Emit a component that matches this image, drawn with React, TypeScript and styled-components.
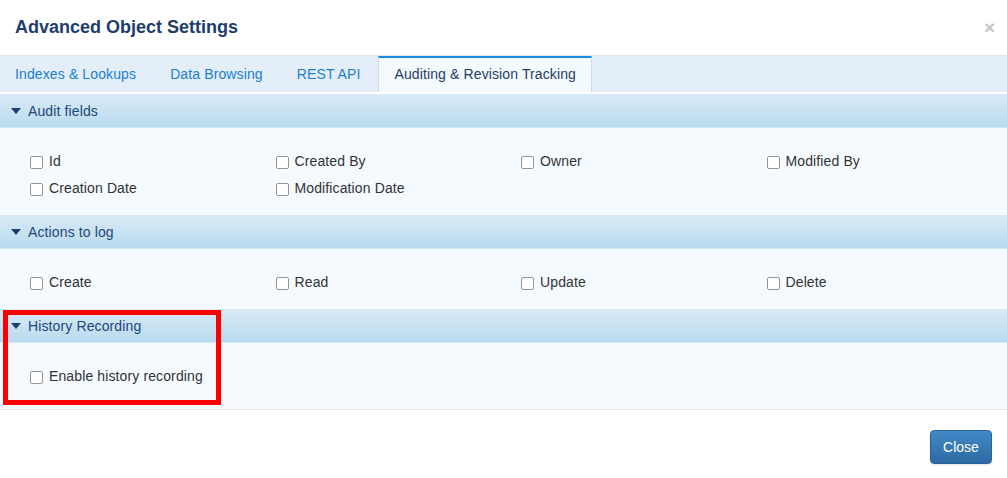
import React from "react";
import styled, { createGlobalStyle } from "styled-components";

const Global = createGlobalStyle`
  html, body { margin: 0; padding: 0; background: #ffffff; }
  body { font-family: "Liberation Sans", Arial, Helvetica, sans-serif; font-size: 14px; color: #333; }
  * { box-sizing: border-box; }
`;

const Modal = styled.div`
  position: relative;
  width: 1007px;
  height: 478px;
  background: #fff;
  overflow: hidden;
  display: flex;
  flex-direction: column;
`;

const Header = styled.div`
  height: 56px;
  border-bottom: 1px solid #e5e5e5;
  display: flex;
  align-items: center;
  justify-content: space-between;
  padding: 0 12px 1px 15px;
`;

const Title = styled.h4`
  margin: 0;
  font-size: 18px;
  font-weight: bold;
  color: #1e3d6b;
  line-height: 20px;
`;

const CloseX = styled.button`
  border: 0;
  background: transparent;
  padding: 0;
  font-family: "Liberation Sans", Arial, sans-serif;
  font-size: 19px;
  font-weight: bold;
  line-height: 1;
  color: #c4c4c4;
  cursor: pointer;
`;

const TabBar = styled.div`
  height: 36px;
  background: #e3eef8;
  display: flex;
  align-items: stretch;
  padding-left: 0;
`;

const Tab = styled.div<{ $active?: boolean }>`
  display: flex;
  align-items: center;
  padding: 0 15px 2px;
  margin-right: 2px;
  font-size: 14px;
  letter-spacing: 0.12px;
  color: ${(p) => (p.$active ? "#263d66" : "#1a7fd4")};
  background: ${(p) => (p.$active ? "#f5faff" : "transparent")};
  border-top: 2px solid ${(p) => (p.$active ? "#1c8de4" : "transparent")};
  border-left: 1px solid ${(p) => (p.$active ? "#c9dced" : "transparent")};
  border-right: 1px solid ${(p) => (p.$active ? "#c9dced" : "transparent")};
  cursor: pointer;

  &:first-child {
    margin-left: -1px;
  }
`;

const Content = styled.div`
  margin-top: 2px;
  display: flex;
  flex-direction: column;
  border-bottom: 1px solid #e5e5e5;
`;

const SectionHeader = styled.div`
  height: 34px;
  display: flex;
  align-items: center;
  gap: 7px;
  padding-left: 11px;
  background: linear-gradient(to bottom, #d9eaf6 0%, #b9dbef 100%);
  border-bottom: 1px solid #d3e6f2;
  color: #24467a;
  font-size: 14px;
  letter-spacing: 0.12px;
`;

const Caret = styled.span`
  width: 0;
  height: 0;
  border-left: 5px solid transparent;
  border-right: 5px solid transparent;
  border-top: 6px solid #1f3f6e;
  margin-top: 1px;
`;

const SectionBody = styled.div<{ $bottom: number }>`
  background: #f5faff;
  padding: 19px 0 ${(p) => p.$bottom}px 30px;
  display: grid;
  grid-template-columns: repeat(4, 245.5px);
  grid-auto-rows: 27px;
`;

const CheckItem = styled.label`
  display: flex;
  align-items: center;
  gap: 6px;
  font-size: 14px;
  letter-spacing: 0.12px;
  color: #333;
  white-space: nowrap;
`;

const Box = styled.span`
  width: 13px;
  height: 13px;
  border: 1px solid #959595;
  border-radius: 2px;
  background: #fff;
  flex: none;
  margin-top: 3px;
`;

const Footer = styled.div`
  flex: 1;
  display: flex;
  justify-content: flex-end;
  align-items: flex-start;
  padding: 20px 15px 0 0;
`;

const PrimaryButton = styled.button`
  width: 62px;
  height: 34px;
  border-radius: 4px;
  border: 1px solid #2a6496;
  background: linear-gradient(to bottom, #4289c8 0%, #2c6aa3 100%);
  color: #fff;
  font-family: "Liberation Sans", Arial, sans-serif;
  font-size: 14px;
  box-shadow: 0 1px 2px rgba(0, 0, 0, 0.12);
  cursor: pointer;
`;

const Highlight = styled.div`
  position: absolute;
  left: 3px;
  top: 310px;
  width: 218px;
  height: 95px;
  border: 5px solid #ff0000;
  pointer-events: none;
`;

type Section = { title: string; items: string[]; bottom: number };

const sections: Section[] = [
  {
    title: "Audit fields",
    items: ["Id", "Created By", "Owner", "Modified By", "Creation Date", "Modification Date"],
    bottom: 14,
  },
  { title: "Actions to log", items: ["Create", "Read", "Update", "Delete"], bottom: 14 },
  { title: "History Recording", items: ["Enable history recording"], bottom: 20 },
];

const tabs = ["Indexes & Lookups", "Data Browsing", "REST API", "Auditing & Revision Tracking"];

export default function App() {
  return (
    <>
      <Global />
      <Modal>
        <Header>
          <Title>Advanced Object Settings</Title>
          <CloseX aria-label="Close">×</CloseX>
        </Header>
        <TabBar>
          {tabs.map((t, i) => (
            <Tab key={t} $active={i === 3}>
              {t}
            </Tab>
          ))}
        </TabBar>
        <Content>
          {sections.map((s) => (
            <React.Fragment key={s.title}>
              <SectionHeader>
                <Caret />
                {s.title}
              </SectionHeader>
              <SectionBody $bottom={s.bottom}>
                {s.items.map((it) => (
                  <CheckItem key={it}>
                    <Box />
                    {it}
                  </CheckItem>
                ))}
              </SectionBody>
            </React.Fragment>
          ))}
        </Content>
        <Footer>
          <PrimaryButton>Close</PrimaryButton>
        </Footer>
        <Highlight />
      </Modal>
    </>
  );
}
